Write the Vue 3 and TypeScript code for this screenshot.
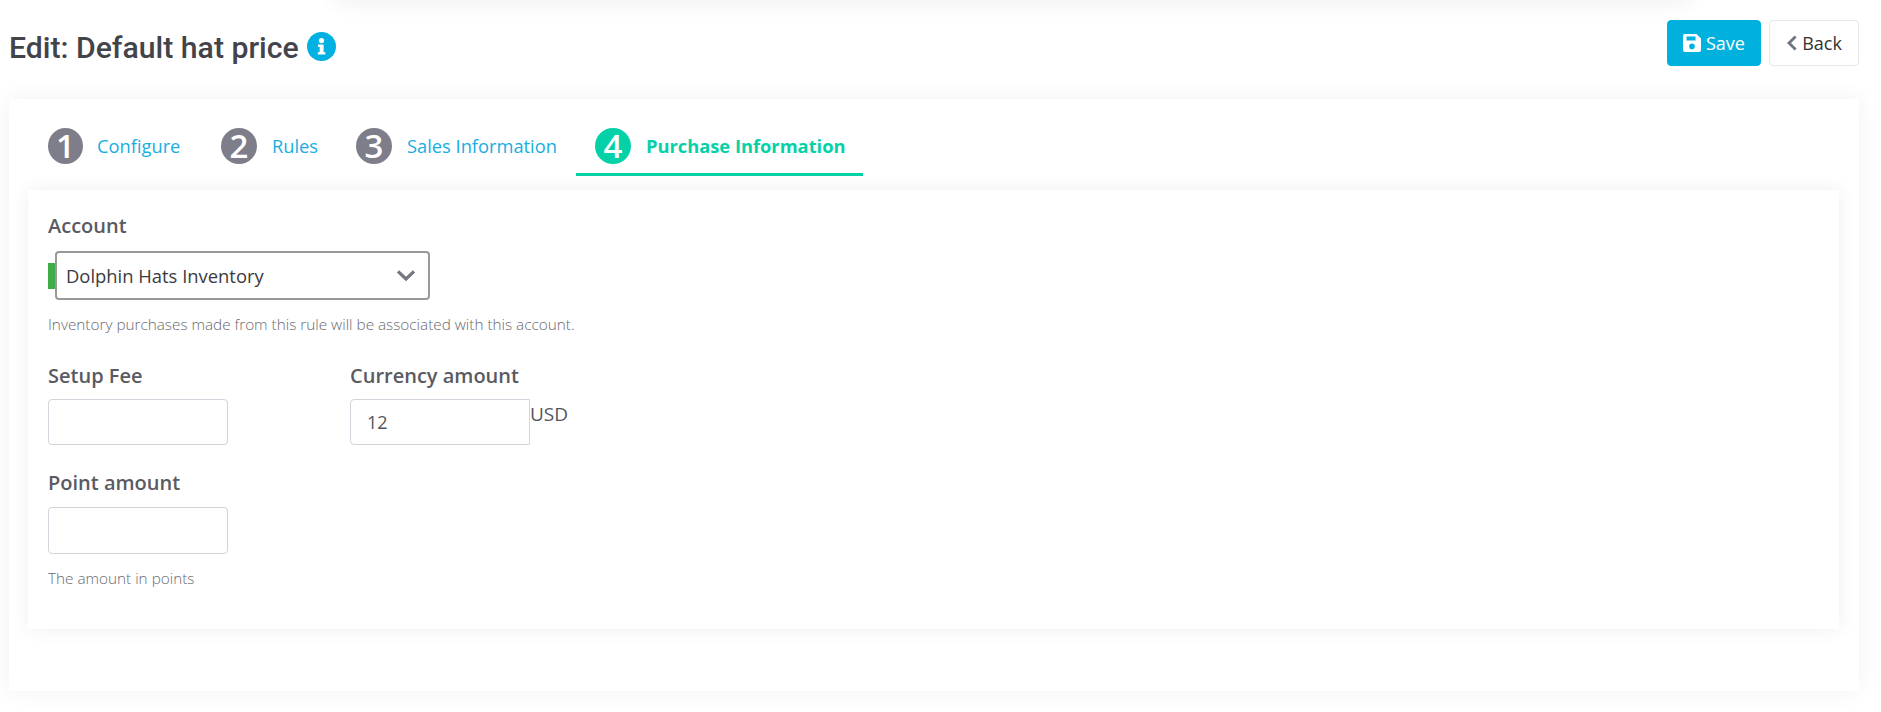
<script setup lang="ts">
interface Step { n: number; label: string; active?: boolean }
const steps: Step[] = [
  { n: 1, label: 'Configure' },
  { n: 2, label: 'Rules' },
  { n: 3, label: 'Sales Information' },
  { n: 4, label: 'Purchase Information', active: true },
]
</script>

<template>
  <div class="page">
    <div class="top-shadow"></div>
    <header class="header">
      <div class="title-wrap">
        <h1 class="title">Edit: Default hat price</h1>
        <svg class="info" viewBox="0 0 29 29" width="29" height="29" aria-hidden="true">
          <circle cx="14.5" cy="14.5" r="14.5" fill="#00b1e1" />
          <circle cx="14.5" cy="8.6" r="2.6" fill="#fff" />
          <path d="M11 12.6h5.6v7.6H18.4v2.4H10.8v-2.4h1.9v-5.2H11z" fill="#fff" />
        </svg>
      </div>
      <div class="actions">
        <button class="btn btn-save" type="button">
          <svg viewBox="0 0 18 18" width="18" height="18" aria-hidden="true">
            <path fill-rule="evenodd" fill="#fff" d="M2 0h11.5L18 4.5V16a2 2 0 0 1-2 2H2a2 2 0 0 1-2-2V2a2 2 0 0 1 2-2zM3.5 2.6v4h9v-4zM9 9.6a2.8 2.8 0 1 0 0 5.6 2.8 2.8 0 0 0 0-5.6z" />
          </svg>
          Save
        </button>
        <button class="btn btn-back" type="button">
          <svg viewBox="0 0 12 16" width="12" height="16" aria-hidden="true">
            <path d="M9.6 1.6 3 8l6.6 6.4" fill="none" stroke="#6f7480" stroke-width="2.8" />
          </svg>
          Back
        </button>
      </div>
    </header>

    <main class="outer">
      <nav class="tabs">
        <div v-for="s in steps" :key="s.n" class="tab" :class="{ active: s.active, narrow: s.n === 1 }">
          <span class="num">{{ s.n }}</span>
          <span class="tab-label">{{ s.label }}</span>
        </div>
      </nav>

      <section class="inner">
        <label class="label first">Account</label>
        <div class="select-row">
          <span class="bar"></span>
          <div class="select">
            <span>Dolphin Hats Inventory</span>
            <svg viewBox="0 0 18 12" width="20" height="13" aria-hidden="true">
              <path d="M1.6 2.2 9 9.2l7.4-7" fill="none" stroke="#74777f" stroke-width="3" />
            </svg>
          </div>
        </div>
        <p class="help first-help">Inventory purchases made from this rule will be associated with this account.</p>

        <div class="row">
          <div class="field setup">
            <label class="label">Setup Fee</label>
            <div class="input short"></div>
          </div>
          <div class="field">
            <label class="label">Currency amount</label>
            <div class="currency">
              <div class="input short cur-input">12</div>
              <span class="usd">USD</span>
            </div>
          </div>
        </div>

        <div class="field point">
          <label class="label">Point amount</label>
          <div class="input"></div>
        </div>
        <p class="help second-help">The amount in points</p>
      </section>
    </main>
  </div>
</template>

<style scoped>
.page {
  position: relative;
  width: 1881px;
  height: 712px;
  background: #fff;
  overflow: hidden;
  font-family: "Open Sans", "Noto Sans", sans-serif;
  color: #3f3f46;
}
.top-shadow {
  position: absolute;
  left: 335px;
  right: 190px;
  top: -20px;
  height: 20px;
  box-shadow: 0 2px 22px rgba(0, 0, 0, 0.07);
}
.header {
  display: flex;
  justify-content: space-between;
  height: 99px;
  padding: 20px 22px 0 9px;
  box-sizing: border-box;
}
.title-wrap {
  display: flex;
  align-items: flex-start;
  gap: 8px;
  padding-top: 12px;
}
.title {
  margin: 0;
  font-family: Roboto, sans-serif;
  font-size: 30.2px;
  font-weight: 500;
  line-height: 32px;
  color: #43434b;
}
.actions { display: flex; gap: 8px; align-items: flex-start; }
.btn {
  display: flex;
  align-items: center;
  justify-content: center;
  height: 46px;
  box-sizing: border-box;
  border-radius: 4px;
  font-family: "Open Sans", sans-serif;
  font-size: 18px;
  padding: 0;
}
.btn-save {
  width: 94px;
  gap: 5px;
  background: #00b1dd;
  border: 1px solid #00b1dd;
  color: #fff;
}
.btn-back {
  width: 90px;
  gap: 4px;
  background: #fff;
  border: 1px solid #e8e8f1;
  color: #333;
}
.outer {
  margin-left: 9px;
  width: 1850px;
  height: 592px;
  padding: 20px 20px 0 19px;
  box-sizing: border-box;
  background: #fff;
  box-shadow: 0 0 22px rgba(0, 0, 0, 0.06);
}
.tabs {
  display: grid;
  grid-template-columns: 173px 135px 239px 287px;
  height: 57px;
  margin-left: 1px;
}
.tab {
  display: flex;
  align-items: flex-start;
  gap: 15px;
  padding: 9px 0 0 19px;
  box-sizing: border-box;
  height: 57px;
  border-bottom: 3px solid transparent;
}
.tab.narrow { gap: 14px; }
.tab.narrow .num { width: 35px; }
.tab.active { border-bottom-color: #05d1a8; }
.num {
  width: 36px;
  height: 36px;
  border-radius: 50%;
  background: #7d7e8a;
  color: #fff;
  font-size: 33px;
  font-weight: 600;
  line-height: 36px;
  text-align: center;
  flex: none;
}
.tab.active .num { background: #05d1a8; }
.tab-label {
  font-size: 18.3px;
  line-height: 36px;
  color: #17aee0;
}
.tab.active .tab-label { color: #05d1a8; font-weight: 700; }
.inner {
  margin-top: 14px;
  height: 439px;
  padding: 23px 20px 0;
  box-sizing: border-box;
  background: #fff;
  box-shadow: 0 0 18px rgba(0, 0, 0, 0.07);
}
.label {
  display: block;
  font-size: 20px;
  font-weight: 600;
  line-height: 26px;
  color: #5a5a62;
}
.select-row { display: flex; align-items: center; margin-top: 12px; }
.bar { width: 7px; height: 26px; background: #3fae49; }
.select {
  width: 375px;
  height: 49px;
  box-sizing: border-box;
  border: 2px solid #999;
  border-radius: 4px;
  display: flex;
  align-items: center;
  justify-content: space-between;
  padding: 0 12px 0 9px;
  font-size: 18.4px;
  color: #3a3a40;
  background: #fff;
}
.help {
  margin: 0;
  font-size: 15.3px;
  font-weight: 300;
  line-height: 20px;
  color: #6a6a71;
}
.first-help { margin-top: 14px; }
.row { display: flex; margin-top: 29px; }
.setup { width: 302px; }
.input {
  width: 180px;
  height: 47px;
  margin-top: 11px;
  box-sizing: border-box;
  border: 1px solid #d3d4dc;
  border-radius: 4px;
  background: #fff;
}
.input.short { height: 46px; margin-top: 10px; }
.currency { display: flex; align-items: flex-start; }
.cur-input {
  border-radius: 4px 0 0 4px;
  padding: 0 16px;
  font-size: 18px;
  line-height: 45px;
  color: #55555d;
}
.usd {
  margin-top: 12px;
  font-size: 19px;
  line-height: 26px;
  color: #55555d;
}
.point { margin-top: 25px; }
.second-help { margin-top: 14px; }
</style>

<style>
html, body { margin: 0; background: #fff; }
</style>
